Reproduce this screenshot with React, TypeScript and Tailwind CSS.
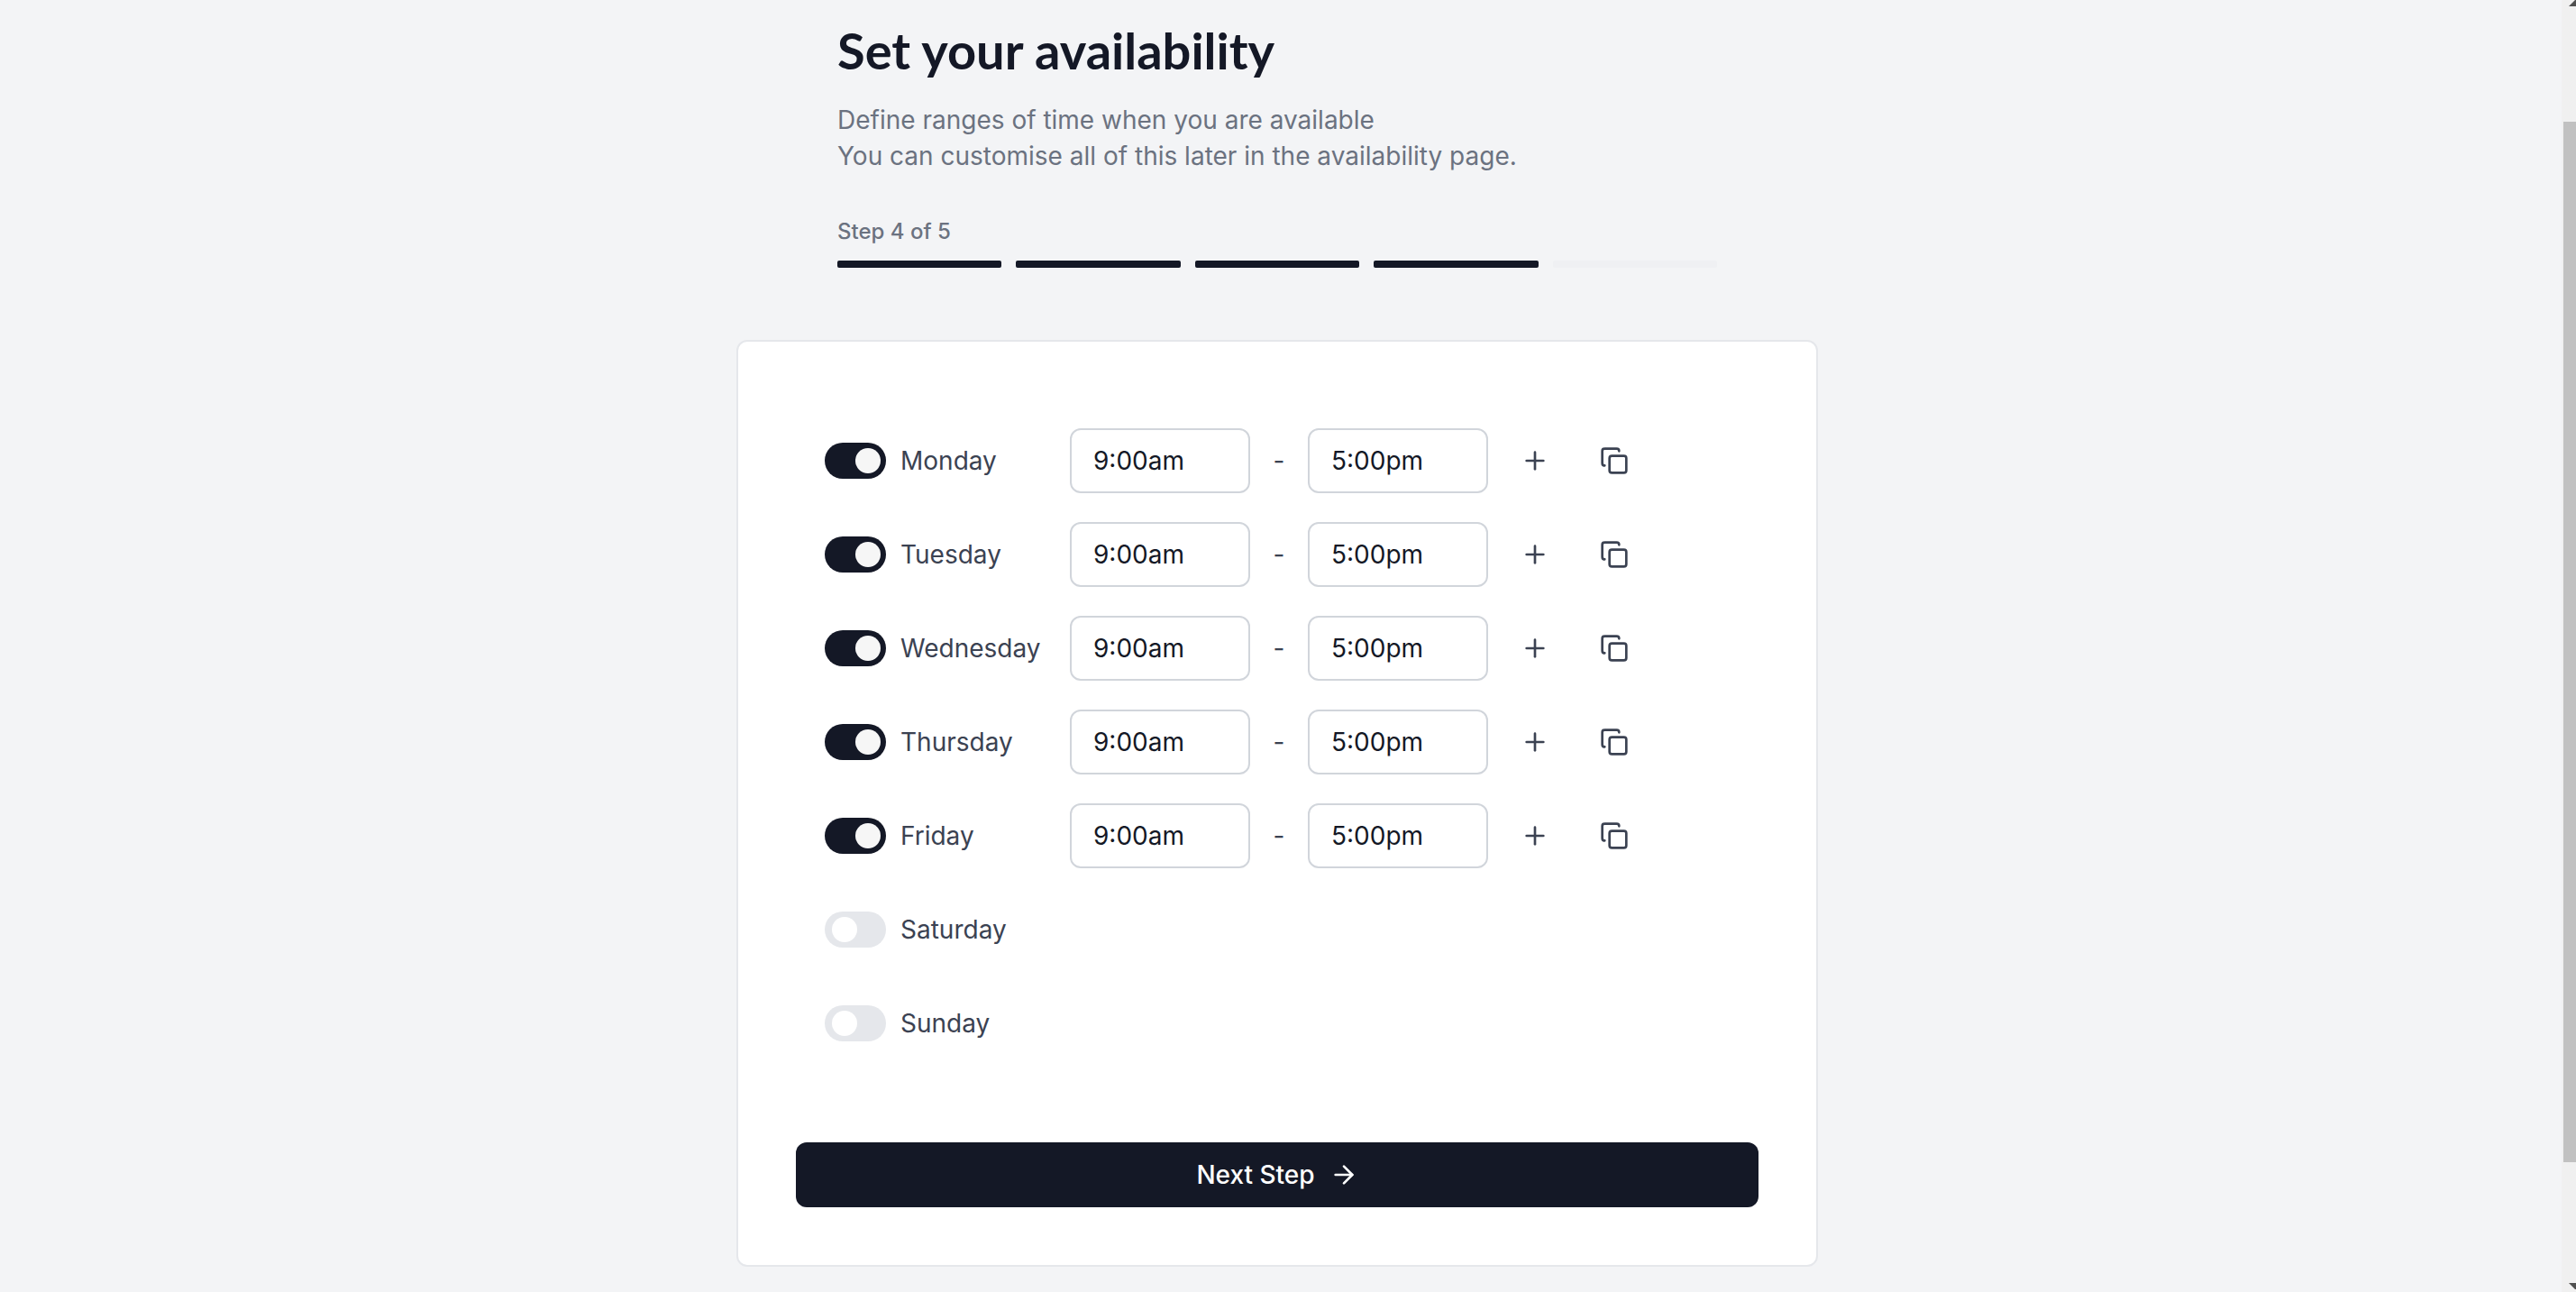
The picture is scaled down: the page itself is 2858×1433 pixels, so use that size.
import { useState } from 'react';
import { ArrowRight, Copy, Plus } from 'lucide-react';

const TOTAL_STEPS = 5;
const CURRENT_STEP = 4;

const initialDays = [
  { name: 'Monday', enabled: true, start: '9:00am', end: '5:00pm' },
  { name: 'Tuesday', enabled: true, start: '9:00am', end: '5:00pm' },
  { name: 'Wednesday', enabled: true, start: '9:00am', end: '5:00pm' },
  { name: 'Thursday', enabled: true, start: '9:00am', end: '5:00pm' },
  { name: 'Friday', enabled: true, start: '9:00am', end: '5:00pm' },
  { name: 'Saturday', enabled: false, start: '9:00am', end: '5:00pm' },
  { name: 'Sunday', enabled: false, start: '9:00am', end: '5:00pm' },
];

type Day = (typeof initialDays)[number];

interface TimeInputProps {
  label: string;
  value: string;
  onChange: (value: string) => void;
}

function TimeInput({ label, value, onChange }: TimeInputProps) {
  return (
    <input
      type="text"
      aria-label={label}
      value={value}
      onChange={(e) => onChange(e.target.value)}
      className="h-18 w-50 rounded-xl border-2 border-[#d1d5db] bg-white px-6 text-[28px] text-[#141826] outline-none focus:border-gray-500"
    />
  );
}

interface DayRowProps {
  day: Day;
  onChange: (day: Day) => void;
}

function DayRow({ day, onChange }: DayRowProps) {
  return (
    <div className="flex h-18 items-center">
      <label className="flex w-68 items-center gap-4">
        <input
          type="checkbox"
          role="switch"
          checked={day.enabled}
          onChange={(e) => onChange({ ...day, enabled: e.target.checked })}
          className="flex h-10 w-17 shrink-0 cursor-pointer appearance-none items-center rounded-full bg-gray-200 px-2 before:size-7 before:rounded-full before:bg-white checked:bg-[#141826] checked:before:translate-x-[26px] checked:before:bg-[#f6f6f6]"
        />
        {day.name}
      </label>
      {day.enabled && (
        <div className="flex items-center">
          <TimeInput
            label={`${day.name} start time`}
            value={day.start}
            onChange={(start) => onChange({ ...day, start })}
          />
          <span className="w-16 text-center">-</span>
          <TimeInput
            label={`${day.name} end time`}
            value={day.end}
            onChange={(end) => onChange({ ...day, end })}
          />
          <button type="button" aria-label="Add time" className="ml-4 flex size-18 items-center justify-center rounded-xl hover:bg-gray-100">
            <Plus className="size-8" />
          </button>
          <button type="button" aria-label="Copy times" className="ml-4 flex size-18 items-center justify-center rounded-xl hover:bg-gray-100">
            <Copy className="size-8" />
          </button>
        </div>
      )}
    </div>
  );
}

function ScrollTrack() {
  return (
    <div aria-hidden="true" className="flex h-screen w-4 shrink-0 flex-col bg-[#f0f0f0]">
      <svg viewBox="0 0 16 8" className="h-2 w-4 fill-[#505050]">
        <path d="M8 7L15 0H16V7Z" />
      </svg>
      <div className="ml-0.5 mt-[127px] h-[1154px] bg-[#c1c1c1]" />
      <svg viewBox="0 0 16 10" className="mt-auto h-2.5 w-4 fill-[#505050]">
        <path d="M8 0H16V7H15Z" />
      </svg>
    </div>
  );
}

export default function App() {
  const [days, setDays] = useState(initialDays);

  const updateDay = (index: number, day: Day) => {
    setDays(days.map((d, i) => (i === index ? day : d)));
  };

  return (
    <div className="flex min-h-screen bg-[#f3f4f6] font-['Inter',sans-serif] text-[28px] leading-10 text-[#3b4252] [font-optical-sizing:none]">
      <main className="flex flex-1 flex-col items-center pr-2">
        <header className="w-full max-w-[976px] pt-6">
          <h1 className="font-['Lato',sans-serif] text-[56px] leading-16 font-bold text-[#141826]">Set your availability</h1>
          <p className="mt-[25px] text-[#6b7280]">
            Define ranges of time when you are available
            <br />
            You can customise all of this later in the availability page.
          </p>
          <p className="mt-12 text-2xl leading-8 font-medium text-[#6b7280]">
            Step {CURRENT_STEP} of {TOTAL_STEPS}
          </p>
          <div className="mt-4 flex gap-4">
            {Array.from({ length: TOTAL_STEPS }, (_, i) => (
              <div key={i} className={i < CURRENT_STEP ? 'h-2 flex-1 rounded-xs bg-[#141826]' : 'h-2 flex-1 rounded-xs bg-[#eff0f3]'} />
            ))}
          </div>
        </header>

        <form
          onSubmit={(e) => e.preventDefault()}
          className="mt-20 w-full max-w-[1200px] rounded-xl border-2 border-gray-200 bg-white p-16"
        >
          <div className="flex flex-col gap-8 px-8 pt-8">
            {days.map((day, i) => (
              <DayRow key={day.name} day={day} onChange={(d) => updateDay(i, d)} />
            ))}
          </div>
          <button
            type="submit"
            className="mt-24 flex h-18 w-full items-center justify-center gap-4 rounded-xl bg-[#141826] font-medium text-white hover:bg-gray-800"
          >
            Next Step
            <ArrowRight className="size-8" />
          </button>
        </form>
      </main>
      <ScrollTrack />
    </div>
  );
}
